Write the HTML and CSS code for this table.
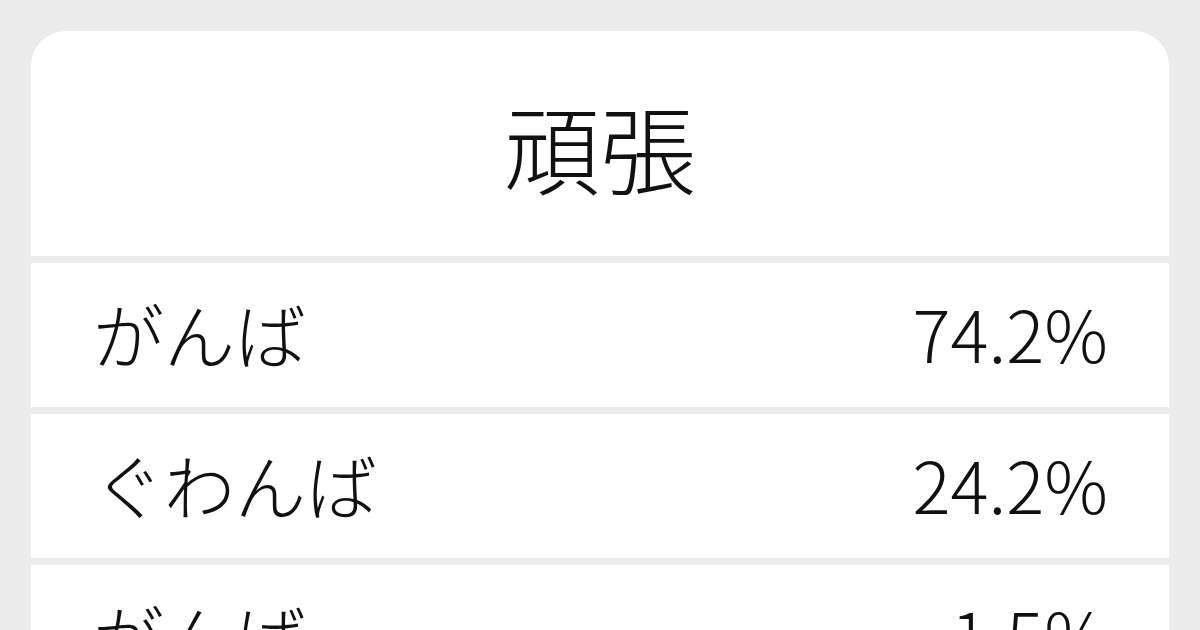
FILE: index.html
```html
<!DOCTYPE html>
<html lang="ja">
<head>
    <meta charset="UTF-8">
    <meta name="viewport" content="width=device-width, initial-scale=1.0">
    <title>頑張 の読み方</title>
    <link rel="stylesheet" href="styles.css">
</head>
<body>
    <div class="card">
        <div class="word">
            <h1>頑張</h1>
        </div>
        <div class="reading">
            <span class="kana">がんば</span>
            <span class="ratio">74.2%</span>
        </div>
        <div class="reading">
            <span class="kana">ぐわんば</span>
            <span class="ratio">24.2%</span>
        </div>
        <div class="reading">
            <span class="kana">がんばっ</span>
            <span class="ratio">1.5%</span>
        </div>
    </div>
</body>
</html>
```

FILE: styles.css
```css
body {
    font-family: "Noto Sans CJK JP", "Noto Sans", sans-serif;
    font-weight: 300;
    background-color: #ececec;
    color: #111;
    margin: 0;
    padding: 31px 31px 0;
    height: 630px;
    box-sizing: border-box;
    overflow: hidden;
}
.card {
    display: flex;
    flex-direction: column;
    gap: 7px;
    border-radius: 35px 35px 0 0;
    overflow: hidden;
}
.word {
    background: #fff;
    height: 225px;
    display: flex;
    align-items: center;
    justify-content: center;
    flex-shrink: 0;
}
.word h1 {
    margin: 0;
    font-size: 96px;
    font-weight: 300;
    line-height: 1;
    padding-top: 4px;
}
.reading {
    background: #fff;
    height: 144px;
    flex-shrink: 0;
    display: flex;
    align-items: center;
    justify-content: space-between;
    padding: 0 61px 5px 62px;
    box-sizing: border-box;
    font-size: 71px;
    line-height: 1;
}
```
